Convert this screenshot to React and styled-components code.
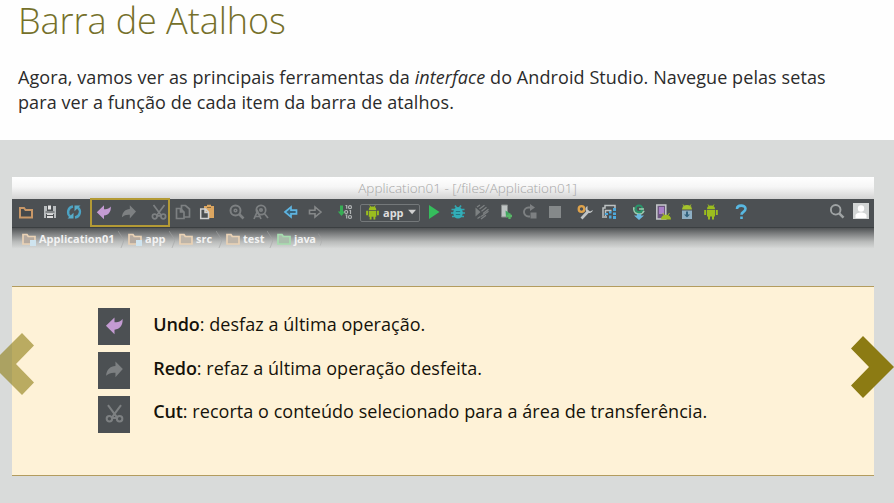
import React from 'react';
import styled, { createGlobalStyle } from 'styled-components';

const Global = createGlobalStyle`
  * { box-sizing: border-box; }
  body { margin: 0; background: #fefefe; font-family: "Open Sans", sans-serif; overflow: hidden; }
`;
const Page = styled.main`
  position: relative;
  width: 894px;
  height: 503px;
  display: flex;
  flex-direction: column;
  overflow: hidden;
`;
const Intro = styled.header`
  height: 140px;
  flex: none;
  padding: 0 18px;
`;
const Title = styled.h1`
  margin: 0;
  height: 46px;
  font-size: 36px;
  line-height: 42px;
  font-weight: 300;
  letter-spacing: -0.06px;
  color: #75702a;
  white-space: nowrap;
`;
const Lead = styled.p`
  margin: 19px 0 0;
  font-size: 18px;
  line-height: 25px;
  font-weight: 400;
  letter-spacing: 0.085px;
  color: #2b2b2b;
  white-space: nowrap;
`;
const Stage = styled.section`
  flex: 1;
  background: #d9dbda;
  padding: 37px 20px 0 12px;
`;
const Window = styled.div`
  height: 74px;
  margin-bottom: 35px;
`;
const WindowTitle = styled.div`
  height: 22px;
  padding-left: 49px;
  background: linear-gradient(#ffffff, #f6f6f6 45%, #d3d3d3);
  color: #a6a6a6;
  font: 300 13.5px/23px "Open Sans", sans-serif;
  text-align: center;
  white-space: nowrap;
`;
const Toolbar = styled.div`
  position: relative;
  height: 29px;
  padding: 0 5px 2px 6px;
  display: flex;
  align-items: center;
  gap: 14px;
  background: #4c5053;
  border-bottom: 1px solid #3b3f41;
`;
const Group = styled.div`
  display: flex;
  align-items: center;
  gap: 8.2px;
`;
const RightGroup = styled(Group)`
  margin-left: auto;
  margin-top: -3px;
`;
const Glyph = styled.svg`
  display: block;
  flex: none;
  width: ${p => p.$size || 16}px;
  height: ${p => p.$size || 16}px;
  overflow: visible;
`;
const Highlight = styled.div`
  position: absolute;
  left: 78px;
  top: -1px;
  width: 80px;
  height: 29px;
  border: 2px solid #b39a35;
`;
const RunTarget = styled.div`
  width: 60px;
  height: 18px;
  margin: 1px -2.5px 0 -1.5px;
  padding: 0 4px;
  display: flex;
  align-items: center;
  gap: 3px;
  border: 1px solid #74787a;
  border-radius: 2px;
  color: #dedede;
  font: 700 11px/14px "Open Sans", sans-serif;
`;
const Crumbs = styled.nav`
  height: 23px;
  padding: 0 0 1px 9px;
  display: flex;
  align-items: center;
  background: linear-gradient(#505355, #7d7f80 25%, #b9bbba 60%, #d9dbda 90%);
`;
const Crumb = styled.span`
  width: ${p => p.$width}px;
  display: flex;
  align-items: center;
  gap: 2px;
  color: #f2f2f2;
  font: 700 11px/14px "Open Sans", sans-serif;
  letter-spacing: ${p => p.$track || 0}px;
  white-space: nowrap;
`;
const CrumbEdge = styled.svg`
  width: 6px;
  height: 17px;
  margin-left: auto;
  margin-right: 3px;
`;
const Panel = styled.div`
  height: 190px;
  padding: 21px 0 0 86px;
  display: flex;
  flex-direction: column;
  gap: 6.5px;
  background: #fef2d7;
  border-top: 1px solid #b39c5e;
  border-bottom: 1px solid #b39c5e;
`;
const Item = styled.div`
  display: flex;
  gap: 23.3px;
  height: 37.37px;
`;
const Tile = styled.div`
  width: 32px;
  height: 37.37px;
  flex: none;
  display: grid;
  place-items: center;
  padding-bottom: 2px;
  background: #4c5053;
`;
const Description = styled.p`
  margin: 3.65px 0 0;
  color: #15120a;
  font-size: 18px;
  line-height: 25px;
  letter-spacing: 0.05px;
  white-space: nowrap;
  b { font-weight: 600; letter-spacing: -0.15px; }
`;
const Arrow = styled.button`
  position: absolute;
  top: ${p => p.$top}px;
  ${p => p.$side}: ${p => p.$offset}px;
  padding: 0;
  border: 0;
  background: none;
  svg { display: block; width: 43px; height: 62px; }
`;

const G = '#7d8082';
const droid = c => (
  <g fill={c}>
    <path d="M4 5.2a4 3.6 0 0 1 8 0zM4 6h8v6.5H4zM1.2 6h2v5h-2zM12.8 6h2v5h-2zM5 12h2v3.5H5zM9 12h2v3.5H9z" />
    <path d="M5 .5l1.4 2M11 .5l-1.4 2" stroke={c} />
  </g>
);
const art = {
  folder: <path d="M2 4h4l1.5 2H14v7.5H2z" fill="#45494b" stroke="#c89767" strokeWidth="2" />,
  save: <><path d="M2 2h12v12H2z" fill="#b8bcbe" /><path d="M5 2h6v5H5z" fill="#4c5053" /><path d="M6 1.5h3v4H6z" fill="#e5e5e5" /><path d="M5 9.5h6V14H5z" fill="#dedede" /><path d="M3.5 8h9M5 11.5h6M4.5 10v4M11.5 10v4" stroke="#4c5053" /></>,
  sync: <><path d="M7 2.5a5.6 5.6 0 0 0-2.7 10M9 13.5a5.6 5.6 0 0 0 2.7-10" fill="none" stroke="#4ba3c4" strokeWidth="2.4" /><path d="M1.5 14.5h6V8.8zM14.5 1.5h-6v5.7z" fill="#59acc8" /></>,
  undo: <path d="M.8 8.2L8 1.300v3.900c3 .4 4.800-.4 6.800-2.600.4 5.400-2.300 8.600-6.800 8.900v3.800z" fill="#c49bd3" />,
  redo: <path d="M15 7.600L8.800 1.300v3.700C4.400 5.200 1.300 8 .9 13.300c2.400-2.200 4.700-2.800 7.900-2.500v3.700z" fill={G} />,
  cut: <g fill="none" stroke={G} strokeWidth="1.7"><path d="M2.500 1l7.800 10.500M13.500 1L5.700 11.500M6 11.800h4" /><circle cx="3.700" cy="12.500" r="2.300" /><circle cx="12.300" cy="12.500" r="2.300" /></g>,
  copy: <g fill="#4c5053" stroke={G} strokeWidth="1.700"><path d="M6.500 1.500h4l4 3.500v8h-8z" /><path d="M1.500 4.500h4L9 8v6.500H1.500zM5.500 4.500V8H9" /></g>,
  paste: <><path d="M5 2h3V.8h4V2h3v12H5z" fill="#dca660" /><path d="M8 3.500h4" stroke="#8a6b42" /><path d="M1.700 5h5L9.500 8v6.500H1.700zM6 5v3.500h3.500" fill="#4c5053" stroke="#d0d0d0" strokeWidth="1.500" /></>,
  find: <g fill="none" stroke={G} strokeWidth="2"><circle cx="6.500" cy="6.500" r="5" /><path d="M10 10l4.500 4.500" strokeWidth="2.600" /><circle cx="6.500" cy="6.500" r="1.300" strokeWidth="1.600" /></g>,
  replace: <g fill="none" stroke={G} strokeWidth="1.700"><circle cx="8" cy="6" r="4.700" /><path d="M11 9l4 5M1 15L4.500 7 8 15M2.300 12.500h4.500" /><circle cx="8" cy="6" r="1.200" /></g>,
  back: <path d="M2 8l6-5v3.200h5.500v3.600H8V13z" fill="#386178" stroke="#5eb4e1" strokeWidth="1.700" />,
  forward: <path d="M14 8L8 3v3.200H2.500v3.600H8V13z" fill="#4c5053" stroke="#858889" strokeWidth="1.600" />,
  make: <><path d="M3 1.500h3v6h2.200l-3.700 4.500L.8 7.500H3z" fill="#37ad55" /><g fill="none" stroke="#b2b5b6" strokeWidth="1.200"><path d="M8.500 1.500h1.200v3.300M8.500 11h1.200v3.500" /><circle cx="13" cy="3.200" r="1.500" /><circle cx="9.200" cy="8" r="1.500" /><path d="M12.500 6.500h1V10" /><circle cx="13" cy="13" r="1.500" /></g></>,
  droid: droid('#9bbd1e'),
  run: <path d="M3 1L13.500 8 3 15z" fill="#35bd5c" />,
  debug: <><g stroke="#32a6b0" strokeWidth="1.600"><path d="M1.500 5.500h13M1 9h14M2 12.500h12M5 1.500l2 3M11 1.500l-2 3" /></g><ellipse cx="8" cy="8.800" rx="4.800" ry="5.800" fill="#32aeb8" /><path d="M5.800 7.500h4.400M5.800 10.500h4.400" stroke="#237984" /></>,
  coverage: <><path d="M1.500 3.500l5 4.500-5 4.500z" fill="#7d8182" /><g fill="none" stroke={G} strokeWidth="1.300"><path d="M3 3l3-2M5.500 5l5-3.800M7.500 7.200l5-4M9 9.500l5.500-4.300M7.200 12.500l7.300-5.300M3.500 14.500l3-2M7 15l5-3.800" /></g></>,
  attach: <><path d="M3.500 1h6v12h-6z" fill="#bec3c3" stroke="#878c8c" /><path d="M7.500 6.500L12 9.500l-4 4z" fill="#42a862" /><path d="M8.500 12h5.500M11.500 9.500v5.500" stroke="#58b567" strokeWidth="2.300" /></>,
  restart: <><path d="M9 3.500H6.500a4.500 4.500 0 0 0 0 9H8" fill="none" stroke={G} strokeWidth="1.900" /><path d="M8 0l5 3.500L8 7zM8.500 8.500h6v6h-6z" fill={G} /></>,
  stop: <path d="M2 2h12v12H2z" fill="#85898a" />,
  wrench: <><circle cx="4.500" cy="5" r="2.800" fill="none" stroke="#dea24b" strokeWidth="2.300" /><path d="M4.500 14.500L11.500 7" stroke="#c1c5c6" strokeWidth="2.700" /><path d="M10.500 2v3.500l2.500 2 3-1.500a4 4 0 0 1-6 2.300C7.900 6 8 3.500 10.500 2z" fill="#c1c5c6" /></>,
  structure: <><path d="M2 12V4h2V1.500h10V5M4.500 12V6.500h6M1 13h5" fill="none" stroke="#bdc1c2" strokeWidth="1.500" /><path d="M8 7h2.500v2.500H8zM12 4h3v3h-3zM12 8.500h3v2.500h-3zM8 11.500h2.500v3H8zM12 12h3v3h-3zM4 9h3v2H4z" fill="#4ea9dc" /></>,
  gradle: <><circle cx="8" cy="4.800" r="3.400" fill="#4c5053" stroke="#28956a" strokeWidth="2" /><path d="M3 3.200a5.300 5.300 0 0 0 10 3.500M8 5h5" fill="none" stroke="#9acfb0" strokeWidth="1.700" /><path d="M6 10h4v1.500h3L8 16l-5-4.500h3z" fill="#6ab9de" /></>,
  avd: <><path d="M1.800 1h9v14h-9z" fill="#6d5880" stroke="#c5c8ca" strokeWidth="1.500" /><path d="M4 3h5v7H4z" fill="#a980c8" /><path d="M6 15.500a5 4.800 0 0 1 10 0z" fill="#a1bd26" /><path d="M7.500 9l1.500 2M14.500 9L13 11" stroke="#a1bd26" /></>,
  sdk: <><path d="M3 5.500a5 4.500 0 0 1 10 0z" fill="#a5c32c" /><path d="M4 .5l1.500 2M12 .5l-1.500 2" stroke="#a5c32c" /><path d="M3 6.500h10V15H3z" fill="#8eafc4" /><path d="M7 7.500h2v3h2l-3 3-3-3h2z" fill="#32627e" /></>,
  help: <path d="M4 5c0-4.500 8.500-4.300 8.500-.3 0 3.300-4 3-4 6M8.500 12.500v2.500" fill="none" stroke="#58b8e2" strokeWidth="2.600" />,
  search: <g fill="none" stroke="#9fa3a4" strokeWidth="1.900"><circle cx="6.700" cy="6.800" r="4.800" /><path d="M10.200 10.400l4.300 4.300" strokeWidth="2.600" /></g>,
  user: <><path d="M0 0h16v16H0z" fill="#d2d5d5" /><circle cx="8" cy="5.500" r="3.200" fill="#fff" /><path d="M2.500 15v-2.500c0-4 11-4 11 0V15z" fill="#fff" /></>,
  down: <path d="M1.500 3.500h10.500l-5.200 6z" fill="#d0d0d0" />,
  crumb: <><path d="M2 3.500h4l1.300 2H14v7.500H2z" fill="#bdb4a8" stroke="#ead2b5" strokeWidth="1.700" /></>,
  module: <><path d="M2 3.500h4l1.300 2H14v7.500H2z" fill="#b5aaa0" stroke="#ead2b5" strokeWidth="1.700" /><path d="M9 9h6v6H9z" fill="#cfe4ef" /></>,
  source: <path d="M2 3.500h4l1.300 2H14v7.500H2z" fill="#a9bdab" stroke="#a6ddaf" strokeWidth="1.700" />,
};
const Icon = ({ name, size }) => <Glyph viewBox="0 0 16 16" $size={size} aria-hidden="true">{art[name]}</Glyph>;
const Icons = ({ names }) => names.map(n => <Icon key={n} name={n} />);

const crumbs = [
  ['Application01', 'module', 106, 0.02],
  ['app', 'module', 51],
  ['src', 'crumb', 47],
  ['test', 'crumb', 51],
  ['java', 'source', 49, -0.3],
];
const items = [
  ['undo', 'Undo', 'desfaz a última operação.'],
  ['redo', 'Redo', 'refaz a última operação desfeita.'],
  ['cut', 'Cut', 'recorta o conteúdo selecionado para a área de transferência.'],
];

export default function App() {
  return (
    <Page>
      <Global />
      <Intro>
        <Title>Barra de Atalhos</Title>
        <Lead>
          Agora, vamos ver as principais ferramentas da <em>interface</em> do Android Studio. Navegue pelas setas<br />
          para ver a função de cada item da barra de atalhos.
        </Lead>
      </Intro>
      <Stage>
        <Window>
          <WindowTitle>Application01 - [/files/Application01]</WindowTitle>
          <Toolbar>
            <Group><Icons names={['folder', 'save', 'sync']} /></Group>
            <Group><Icons names={['undo', 'redo']} /></Group>
            <Group><Icons names={['cut', 'copy', 'paste']} /></Group>
            <Group><Icons names={['find', 'replace']} /></Group>
            <Group><Icons names={['back', 'forward']} /></Group>
            <Group>
              <Icon name="make" />
              <RunTarget><Icon name="droid" size={15} />app<Icon name="down" size={12} /></RunTarget>
              <Icons names={['run', 'debug', 'coverage', 'attach', 'restart', 'stop']} />
            </Group>
            <Group><Icons names={['wrench', 'structure']} /></Group>
            <Group><Icons names={['gradle', 'avd', 'sdk', 'droid']} /></Group>
            <Group><Icon name="help" /></Group>
            <RightGroup><Icons names={['search', 'user']} /></RightGroup>
            <Highlight />
          </Toolbar>
          <Crumbs>
            {crumbs.map(([label, icon, width, track]) => (
              <Crumb key={label} $width={width} $track={track}>
                <Icon name={icon} />{label}
                <CrumbEdge viewBox="0 0 6 17"><path d="M0 0l6 9-3 8" fill="none" stroke="#a5a6a6" strokeWidth=".6" /></CrumbEdge>
              </Crumb>
            ))}
          </Crumbs>
        </Window>
        <Panel>
          {items.map(([icon, name, text]) => (
            <Item key={name}>
              <Tile><Icon name={icon} size={19} /></Tile>
              <Description><b>{name}</b>: {text}</Description>
            </Item>
          ))}
        </Panel>
      </Stage>
      <Arrow $side="left" $top={333} $offset={-9} aria-label="Anterior">
        <svg viewBox="0 0 43 62"><path d="M31 0L43 12.500 25 31l18 18.500L31 62 0 31z" fill="#8c7b13" fillOpacity=".6" /></svg>
      </Arrow>
      <Arrow $side="right" $top={336} $offset={0} aria-label="Próximo">
        <svg viewBox="0 0 43 62"><path d="M12 0L0 12.500 18 31 0 49.500 12 62 43 31z" fill="#8c7b13" /></svg>
      </Arrow>
    </Page>
  );
}
